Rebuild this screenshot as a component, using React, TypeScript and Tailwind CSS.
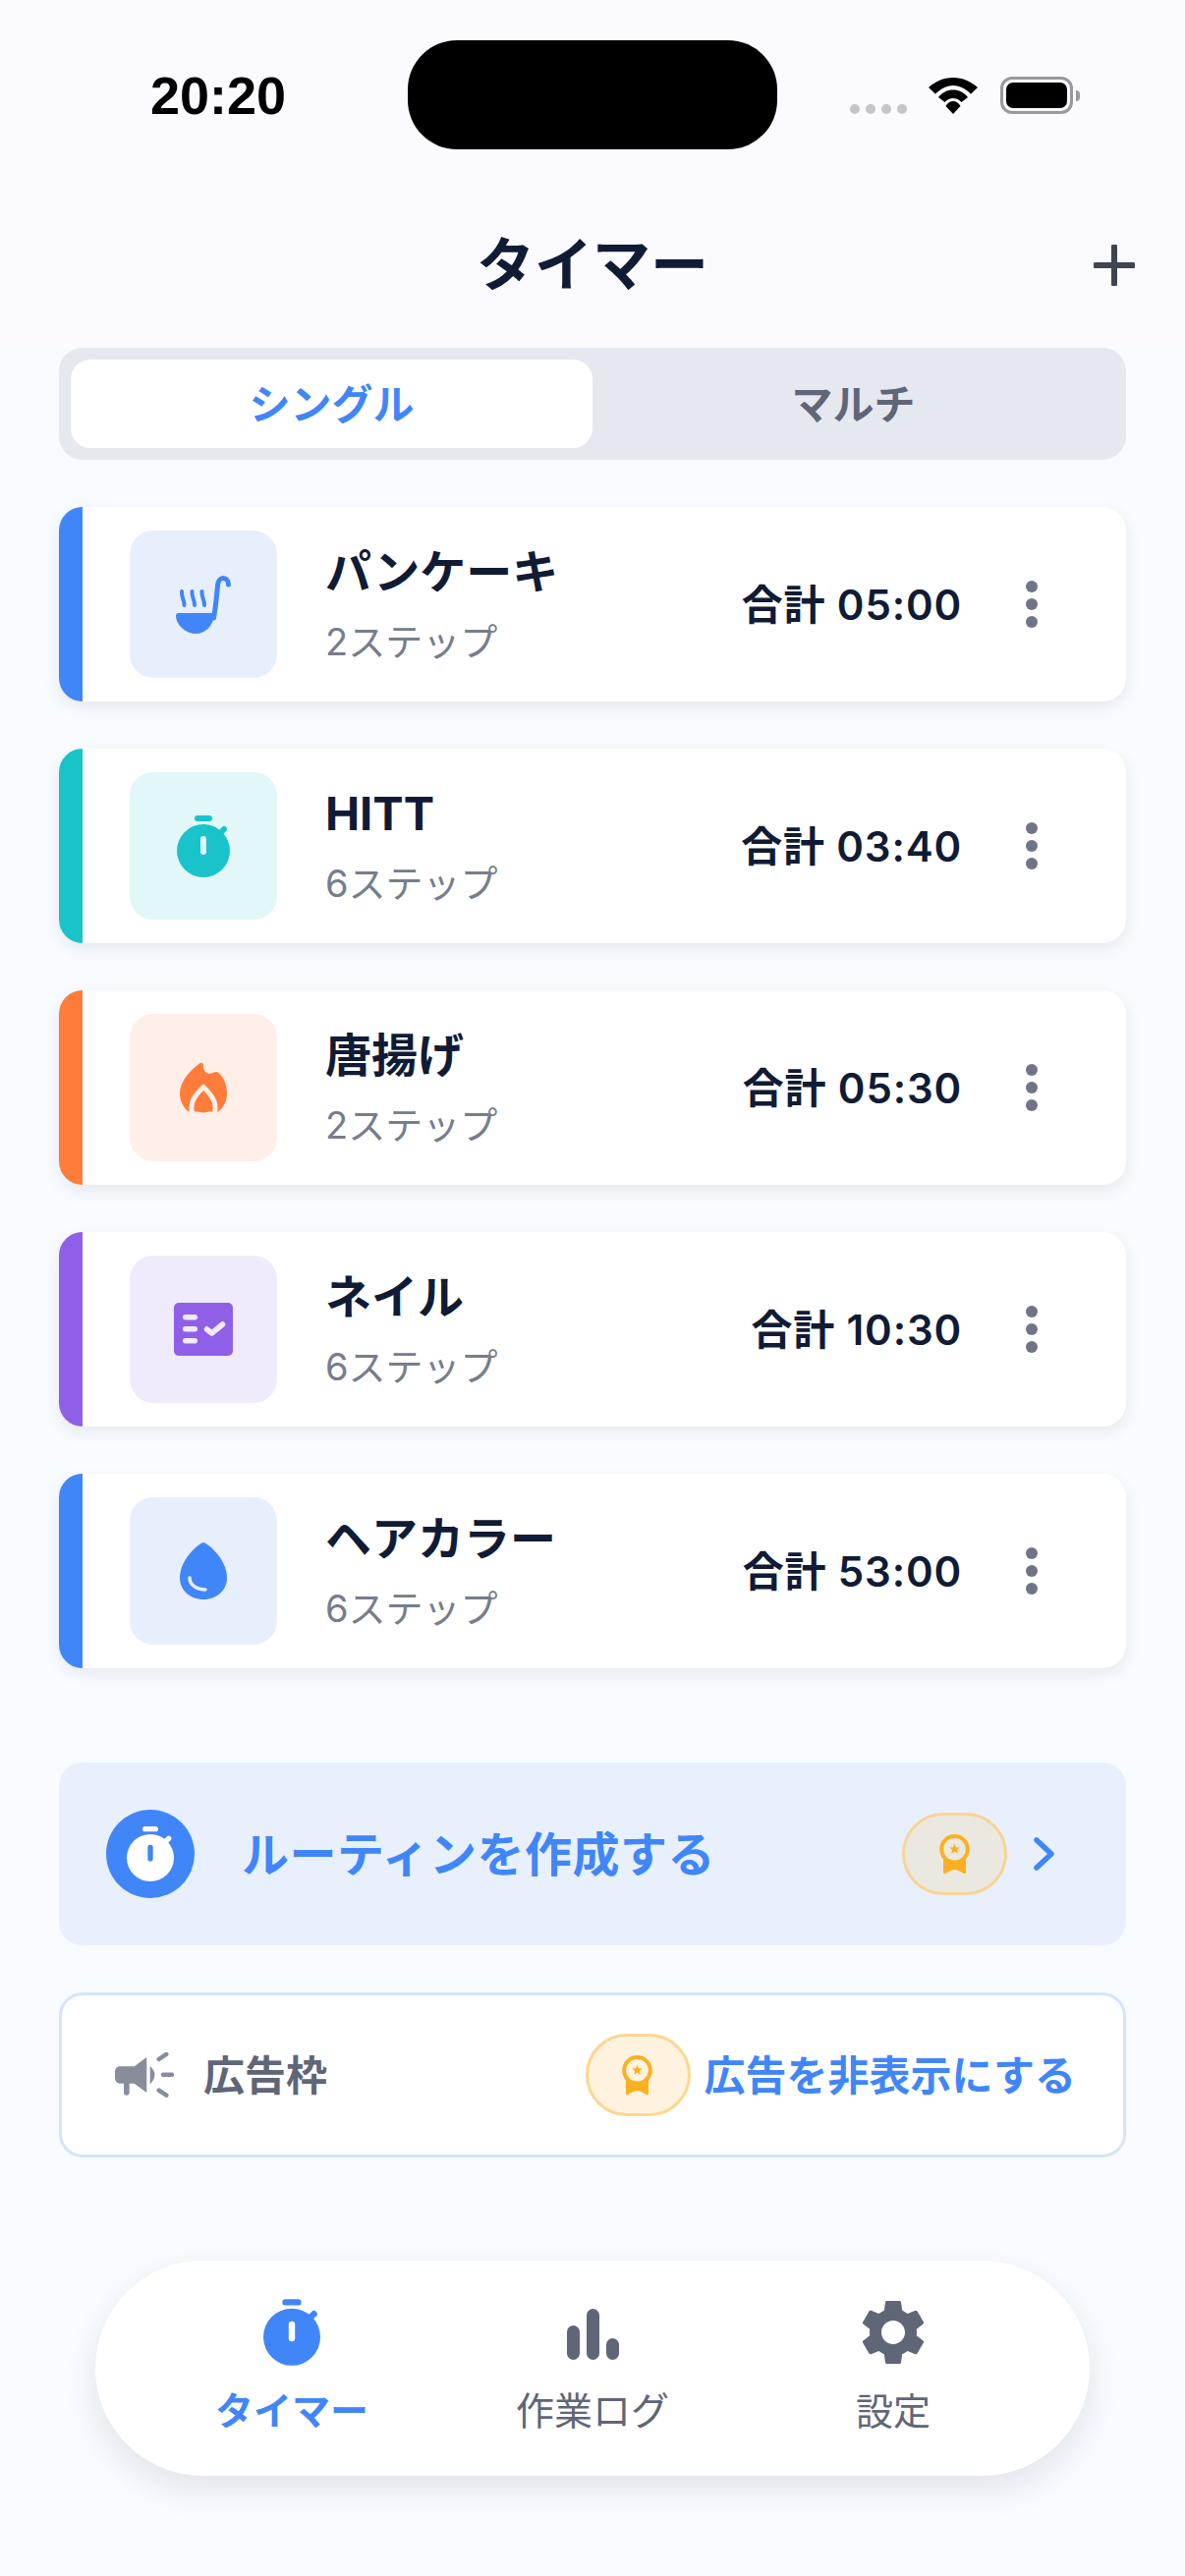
import React from 'react';

const BLUE = '#4086f9';

interface IconProps {
  className?: string;
}

const Stopwatch: React.FC<{ color: string; inner: string; className?: string }> = ({ color, inner, className }) => (
  <svg viewBox="0 0 54 63" className={className}>
    <rect x="18" y="0" width="18" height="6" rx="3" fill={color} />
    <circle cx="27" cy="36" r="27" fill={color} />
    <path d="M44 18 L48 14" stroke={color} strokeWidth="6" strokeLinecap="round" />
    <rect x="24" y="21" width="6" height="19" rx="3" fill={inner} />
  </svg>
);

const Ladle: React.FC<IconProps> = ({ className }) => (
  <svg viewBox="0 0 56 60" className={className} fill="none">
    <path d="M2.5 39 H39.5 C38.5 52 30 60 20 60 C10 60 0 51 0 41.5 C0 40 1 39 2.5 39 Z" fill={BLUE} />
    <path d="M38.5 44 C41 30 41.5 20 42.5 11 C43 6 45.5 3.5 48 3.5 C51 3.5 53.5 6 53.5 10" stroke={BLUE} strokeWidth="5" strokeLinecap="round" />
    <path d="M6 17 C5 22 9 26 8.5 31" stroke={BLUE} strokeWidth="4" strokeLinecap="round" />
    <path d="M16.5 17 C15.5 22 19.5 26 19 31" stroke={BLUE} strokeWidth="4" strokeLinecap="round" />
    <path d="M26.5 17 C25.5 22 29.5 26 29 31" stroke={BLUE} strokeWidth="4" strokeLinecap="round" />
  </svg>
);

const Flame: React.FC<IconProps> = ({ className }) => (
  <svg viewBox="0 0 48 52" className={className} fill="none">
    <path d="M9 50.5 C3 46 0 39 0 32 C0 20 10 9 20 1.5 C22 0 24 1 24 4 C24 8 26 11.7 30 11.7 C33 11.7 35 10 38 10 C44 14 48 22 48 32 C48 39 45 46 39 50.5 Z" fill="#ff7c3b" />
    <path d="M13 53 C10 43 13 36 24 25.5 C35 36 38 43 35 53" stroke="#ffefe8" strokeWidth="5" strokeLinejoin="round" />
    <path d="M24 32.7 C27 36 33 39 33 44 C33 48 29 51.5 24 51.5 C19 51.5 15 48 15 44 C15 39 21 36 24 32.7 Z" fill="#ff7c3b" />
  </svg>
);

const Checklist: React.FC<IconProps> = ({ className }) => (
  <svg viewBox="0 0 60 54" className={className} fill="none">
    <rect width="60" height="54" rx="5" fill="#8f5fe8" />
    <rect x="9" y="12" width="15" height="5.5" rx="2.7" fill="#f0ebfc" />
    <rect x="9" y="24" width="15" height="5.5" rx="2.7" fill="#f0ebfc" />
    <rect x="9" y="36" width="15" height="5.5" rx="2.7" fill="#f0ebfc" />
    <path d="M33.5 27 L38.5 31 L49.5 22" stroke="#f0ebfc" strokeWidth="5.5" strokeLinecap="round" strokeLinejoin="round" />
  </svg>
);

const Drop: React.FC<IconProps> = ({ className }) => (
  <svg viewBox="0 0 48 58" className={className} fill="none">
    <path d="M24 0 C27 0 48 16 48 36 C48 49 37 58 24 58 C11 58 0 49 0 36 C0 16 21 0 24 0 Z" fill={BLUE} />
    <path d="M10 36 C10 43 17 48 26 48" stroke="#e8eefc" strokeWidth="3.5" strokeLinecap="round" />
  </svg>
);

const Medal: React.FC<{ bg: string; className?: string }> = ({ bg, className }) => (
  <svg viewBox="0 0 32 42" className={className} fill="none">
    <path d="M4 22 V40 C4 41 5 41.5 6 41 C9 39.5 12 37 15.5 37 C19 37 22 39.5 25 41 C26 41.5 27 41 27 40 V22 Z" fill="#fbb022" />
    <circle cx="15.5" cy="16.3" r="13.3" fill={bg} stroke="#fbb022" strokeWidth="4" />
    <path d="M15.5 10.8 L17 14.3 L20.7 14.6 L17.9 17 L18.7 20.7 L15.5 18.6 L12.3 20.7 L13.1 17 L10.3 14.6 L14 14.3 Z" fill="#fbb022" />
  </svg>
);

const Megaphone: React.FC<IconProps> = ({ className }) => (
  <svg viewBox="0 0 60 46" className={className} fill="none">
    <path d="M5 14.3 H19.7 L32.3 5 V41 L19.7 31.7 H14.7 V41 C14.7 42.6 13.4 43.7 11.8 43.7 C10.2 43.7 9 42.6 9 41 V31.7 H5 C2 31.7 0 29 0 26 V20 C0 17 2 14.3 5 14.3 Z" fill="#878d9b" />
    <path d="M35.7 14 C39 17 40.5 20 40.5 23 C40.5 26 39 29 35.7 32.5 Z" fill="#878d9b" />
    <path d="M44.7 7 L52.3 1.9" stroke="#878d9b" strokeWidth="4.5" strokeLinecap="round" />
    <path d="M49 22.7 H58" stroke="#878d9b" strokeWidth="4.5" strokeLinecap="round" />
    <path d="M44.7 38.7 L52.3 43.7" stroke="#878d9b" strokeWidth="4.5" strokeLinecap="round" />
  </svg>
);

const Wifi: React.FC<IconProps> = ({ className }) => (
  <svg viewBox="0 0 50 37" className={className} fill="#000">
    <path d="M25 0 C35 0 43 4 50 10 L43 16.7 C38 11.5 32 8 25 8 C18 8 12 11.5 7 16.7 L0 10 C7 4 15 0 25 0 Z" />
    <path d="M25 12.5 C31 12.5 36 15 40 20 L33.5 25 C31 22.5 28 21 25 21 C22 21 19 22.5 16.5 25 L10 20 C14 15 19 12.5 25 12.5 Z" />
    <path d="M25 24 C28 24 30.5 25.5 32.5 29 L25 37 L17.5 29 C19.5 25.5 22 24 25 24 Z" />
  </svg>
);

const recipes = [
  { name: 'パンケーキ', steps: '2ステップ', total: '合計 05:00', bar: 'bg-[#4086f9]', tint: 'bg-[#e8effc]', icon: <Ladle className="w-[56px] h-[60px]" /> },
  { name: 'HITT', steps: '6ステップ', total: '合計 03:40', bar: 'bg-[#19c3ca]', tint: 'bg-[#e1f7f8]', icon: <Stopwatch color="#19c3ca" inner="#e1f7f8" className="w-[54px] h-[63px]" /> },
  { name: '唐揚げ', steps: '2ステップ', total: '合計 05:30', bar: 'bg-[#ff7c3b]', tint: 'bg-[#ffefe8]', icon: <Flame className="w-[48px] h-[52px]" /> },
  { name: 'ネイル', steps: '6ステップ', total: '合計 10:30', bar: 'bg-[#8f5fe8]', tint: 'bg-[#f0ebfc]', icon: <Checklist className="w-[60px] h-[54px]" /> },
  { name: 'ヘアカラー', steps: '6ステップ', total: '合計 53:00', bar: 'bg-[#4086f9]', tint: 'bg-[#e8effc]', icon: <Drop className="w-[48px] h-[58px]" /> },
];

export default function App() {
  return (
    <div className="w-[1206px] h-[2622px] overflow-hidden bg-[#f8fbff] font-['Inter','Noto_Sans_CJK_JP',sans-serif] text-[#101b35]">
      {/* status bar + title */}
      <div className="h-[354px] bg-[#fbfbff]">
        <div className="flex items-start pt-[41px] h-[152px]">
          <div className="w-[415px] pl-[153px] pt-[28px] font-['Liberation_Sans',sans-serif] text-[54px] leading-[56px] font-bold text-black">20:20</div>
          <div className="w-[376px] h-[111px] rounded-[50px] bg-black" />
          <div className="flex items-start pl-[74px]">
            <div className="flex gap-[6px] pt-[65px]">
              <div className="w-[10px] h-[10px] rounded-full bg-[#c5c5c9]" />
              <div className="w-[10px] h-[10px] rounded-full bg-[#c5c5c9]" />
              <div className="w-[10px] h-[10px] rounded-full bg-[#c5c5c9]" />
              <div className="w-[10px] h-[10px] rounded-full bg-[#c5c5c9]" />
            </div>
            <Wifi className="w-[50px] h-[37px] ml-[22px] mt-[38px]" />
            <div className="flex items-center ml-[23px] mt-[37px]">
              <div className="w-[74px] h-[38px] rounded-[12px] border-[3px] border-[#98989d] p-[3px]">
                <div className="w-full h-full rounded-[7px] bg-black" />
              </div>
              <div className="w-[4px] h-[11px] ml-[3px] rounded-r-full bg-[#98989d]" />
            </div>
          </div>
        </div>
        <div className="relative h-[202px] flex items-start justify-center pt-[78px]">
          <h1 className="text-[59px] leading-[80px] font-bold">タイマー</h1>
          <svg viewBox="0 0 42 42" className="absolute right-[51px] top-[97px] w-[42px] h-[42px]" fill="none">
            <path d="M21 2 V40 M2 21 H40" stroke="#3f4450" strokeWidth="6" strokeLinecap="round" />
          </svg>
        </div>
      </div>

      <main className="px-[60px]">
        <div className="flex h-[114px] p-[12px] rounded-[24px] bg-[#e5e8ef]">
          <div className="w-[531px] h-[90px] flex items-center justify-center rounded-[20px] bg-white text-[42px] font-bold text-[#4086f9]">シングル</div>
          <div className="flex-1 flex items-center justify-center text-[42px] font-bold text-[#5f6678]">マルチ</div>
        </div>

        <div className="flex flex-col gap-[48px] mt-[48px]">
          {recipes.map((r) => (
            <div key={r.name} className="flex h-[198px] items-stretch rounded-[24px] overflow-hidden bg-white shadow-[0_6px_18px_rgba(15,27,51,0.08)]">
              <div className={`w-[24px] ${r.bar}`} />
              <div className="flex flex-1 items-center pl-[48px]">
                <div className={`flex items-center justify-center w-[150px] h-[150px] rounded-[24px] ${r.tint}`}>{r.icon}</div>
                <div className="ml-[49px] flex-1">
                  <div className="text-[47px] leading-[60px] font-bold">{r.name}</div>
                  <div className="mt-[16px] text-[38px] leading-[50px] text-[#767d8c]">{r.steps}</div>
                </div>
                <div className="text-[42px] font-semibold tracking-[0.02em]">{r.total}</div>
                <div className="flex flex-col gap-[6px] ml-[65px] mr-[90px]">
                  <div className="w-[12px] h-[12px] rounded-full bg-[#6f7587]" />
                  <div className="w-[12px] h-[12px] rounded-full bg-[#6f7587]" />
                  <div className="w-[12px] h-[12px] rounded-full bg-[#6f7587]" />
                </div>
              </div>
            </div>
          ))}
        </div>

        <div className="flex items-center h-[186px] mt-[96px] pl-[48px] rounded-[24px] bg-[#e8f0fe]">
          <div className="flex items-center justify-center w-[90px] h-[90px] rounded-full bg-[#4086f9]">
            <Stopwatch color="#ffffff" inner="#4086f9" className="w-[48px] h-[56px]" />
          </div>
          <div className="ml-[48px] flex-1 text-[48px] tracking-[0.01em] pt-[2px] font-bold text-[#4086f9]">ルーティンを作成する</div>
          <div className="flex items-center justify-center w-[107px] h-[84px] rounded-full border-[3px] border-[#f7d595] bg-[#ebe8e0]">
            <Medal bg="#ebe8e0" className="w-[32px] h-[42px]" />
          </div>
          <svg viewBox="0 0 22 34" className="w-[22px] h-[34px] ml-[27px] mr-[72px]" fill="none">
            <path d="M3 3 L18 17 L3 31" stroke="#4086f9" strokeWidth="5.5" strokeLinecap="round" strokeLinejoin="round" />
          </svg>
        </div>

        <div className="flex items-center h-[168px] mt-[48px] pl-[54px] pr-[48px] rounded-[24px] border-[3px] border-[#d6e4fc] bg-white">
          <Megaphone className="w-[60px] h-[46px]" />
          <div className="ml-[30px] flex-1 text-[42px] font-semibold text-[#5f6678]">広告枠</div>
          <div className="flex items-center justify-center w-[107px] h-[84px] rounded-full border-[3px] border-[#fdd78e] bg-[#fff3e0]">
            <Medal bg="#fff3e0" className="w-[32px] h-[42px]" />
          </div>
          <div className="ml-[14px] text-[42px] font-bold text-[#4086f9]">広告を非表示にする</div>
        </div>

        <nav className="grid grid-cols-3 h-[219px] mt-[105px] mx-[37px] px-[47px] rounded-[110px] bg-white shadow-[0_14px_36px_rgba(15,27,51,0.1)]">
          <div className="flex flex-col items-center pt-[39px]">
            <Stopwatch color="#4086f9" inner="#ffffff" className="w-[58px] h-[68px]" />
            <div className="mt-[22px] text-[39px] leading-[48px] font-bold text-[#4086f9]">タイマー</div>
          </div>
          <div className="flex flex-col items-center pt-[39px]">
            <div className="flex items-end gap-[7px] h-[68px] pb-[6px]">
              <div className="w-[13px] h-[35px] rounded-full bg-[#5f6678]" />
              <div className="w-[13px] h-[52px] rounded-full bg-[#5f6678]" />
              <div className="w-[13px] h-[22px] rounded-full bg-[#5f6678]" />
            </div>
            <div className="mt-[22px] text-[39px] leading-[48px] text-[#5f6678]">作業ログ</div>
          </div>
          <div className="flex flex-col items-center pt-[39px]">
            <svg viewBox="2.4 2 19.2 20" className="w-[64px] h-[68px]" fill="#5f6678">
              <path d="M19.14 12.94c.04-.3.06-.61.06-.94 0-.32-.02-.64-.07-.94l2.03-1.58c.18-.14.23-.41.12-.61l-1.92-3.32c-.12-.22-.37-.29-.59-.22l-2.39.96c-.5-.38-1.03-.7-1.62-.94l-.36-2.54c-.04-.24-.24-.41-.48-.41h-3.84c-.24 0-.43.17-.47.41l-.36 2.54c-.59.24-1.13.57-1.62.94l-2.39-.96c-.22-.08-.47 0-.59.22L2.74 8.87c-.12.21-.08.47.12.61l2.03 1.58c-.05.3-.09.63-.09.94s.02.64.07.94l-2.03 1.58c-.18.14-.23.41-.12.61l1.92 3.32c.12.22.37.29.59.22l2.39-.96c.5.38 1.03.7 1.62.94l.36 2.54c.05.24.24.41.48.41h3.84c.24 0 .44-.17.47-.41l.36-2.54c.59-.24 1.13-.56 1.62-.94l2.39.96c.22.08.47 0 .59-.22l1.92-3.32c.12-.22.07-.47-.12-.61l-2.01-1.58zM12 15.6c-1.98 0-3.6-1.62-3.6-3.6s1.62-3.6 3.6-3.6 3.6 1.62 3.6 3.6-1.62 3.6-3.6 3.6z" />
            </svg>
            <div className="mt-[22px] text-[38px] leading-[48px] text-[#5f6678]">設定</div>
          </div>
        </nav>
      </main>
    </div>
  );
}
